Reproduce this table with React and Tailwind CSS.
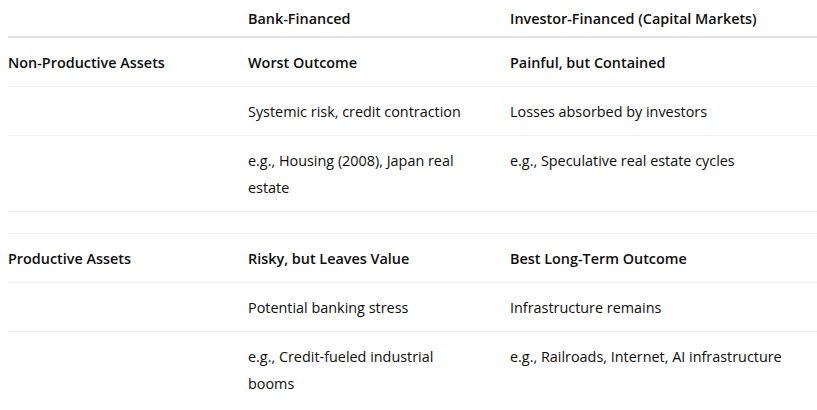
const rows = [
  { a: "Non-Productive Assets", b: "Worst Outcome", c: "Painful, but Contained", bold: true },
  { a: "", b: "Systemic risk, credit contraction", c: "Losses absorbed by investors" },
  { a: "", b: "e.g., Housing (2008), Japan real estate", c: "e.g., Speculative real estate cycles" },
  { a: "", b: "", c: "" },
  { a: "Productive Assets", b: "Risky, but Leaves Value", c: "Best Long-Term Outcome", bold: true },
  { a: "", b: "Potential banking stress", c: "Infrastructure remains" },
  { a: "", b: "e.g., Credit-fueled industrial booms", c: "e.g., Railroads, Internet, AI infrastructure", last: true },
];

export default function App() {
  return (
    <div
      className="bg-white w-[817px] h-[410px] overflow-hidden pl-2 text-[#0d0d0d]"
      style={{ fontFamily: '"Open Sans", "Noto Sans", sans-serif', fontSize: "14.4px" }}
    >
      <table className="w-full table-fixed border-collapse">
        <colgroup>
          <col className="w-[240px]" />
          <col className="w-[262px]" />
          <col />
        </colgroup>
        <thead>
          <tr className="border-b-2 border-[#e3e3e3]">
            <th className="pt-[6px] pb-[4px] leading-[26px] font-semibold text-left"></th>
            <th className="pt-[6px] pb-[4px] leading-[26px] font-semibold text-left">Bank-Financed</th>
            <th className="pt-[6px] pb-[4px] leading-[26px] font-semibold text-left">Investor-Financed (Capital Markets)</th>
          </tr>
        </thead>
        <tbody>
          {rows.map((r, i) => (
            <tr key={i} className={r.last ? "" : "border-b border-[#efefef]"}>
              <td className="pt-[11px] pb-[10px] leading-[27px] align-top font-semibold pr-4">{r.a}</td>
              <td className={`pt-[11px] pb-[10px] leading-[27px] align-top pr-[34px] ${r.bold ? "font-semibold" : ""}`}>{r.b}</td>
              <td className={`pt-[11px] pb-[10px] leading-[27px] align-top pr-4 ${r.bold ? "font-semibold" : ""}`}>{r.c}</td>
            </tr>
          ))}
        </tbody>
      </table>
    </div>
  );
}
